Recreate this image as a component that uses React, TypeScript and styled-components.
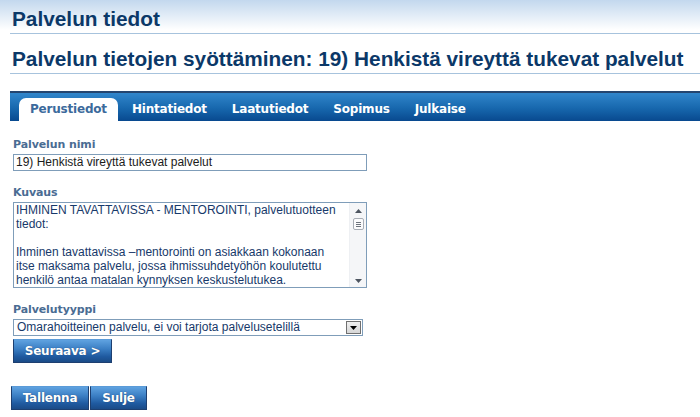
import React from 'react';
import styled, { createGlobalStyle } from 'styled-components';

const GlobalStyle = createGlobalStyle`
  html, body {
    margin: 0;
    padding: 0;
    background: #fff;
  }
  body {
    font-family: 'Liberation Sans', Arial, sans-serif;
  }
`;

const Page = styled.div`
  width: 700px;
  height: 417px;
  overflow: hidden;
  background: linear-gradient(to bottom, #c3d8ee 0px, #ffffff 30px);
  padding: 7px 0 0 10px;
  box-sizing: border-box;
`;

const Heading = styled.h1<{ $size: number }>`
  margin: 0;
  padding: 0 0 2px 2px;
  font-family: 'Liberation Sans', Arial, sans-serif;
  font-size: ${(p) => p.$size}px;
  font-weight: bold;
  color: #0b3868;
  line-height: 24px;
  border-bottom: 1px solid #a7c3dd;
  white-space: nowrap;
`;

const SubHeading = styled(Heading)`
  margin-top: 13px;
`;

const TabBar = styled.nav`
  margin-top: 17px;
  height: 28px;
  border-top: 2px solid #24456f;
  background: linear-gradient(to bottom, #3186cb 0%, #1767ad 55%, #08498f 100%);
  display: flex;
  align-items: flex-end;
  padding-left: 9px;
`;

const Tab = styled.div<{ $active?: boolean }>`
  font-family: Verdana, 'DejaVu Sans', sans-serif;
  font-size: 12px;
  font-weight: bold;
  height: 23px;
  line-height: 22px;
  padding: 0 11px 0 11px;
  margin-right: 3px;
  color: ${(p) => (p.$active ? '#3c6a9c' : '#ffffff')};
  background: ${(p) => (p.$active ? '#ffffff' : 'transparent')};
  border-radius: 7px 7px 0 0;
  letter-spacing: -0.2px;
`;

const Form = styled.div`
  padding: 17px 0 0 3px;
`;

const Label = styled.div`
  font-family: Verdana, 'DejaVu Sans', sans-serif;
  font-size: 11px;
  font-weight: bold;
  color: #4a6c93;
  line-height: 13px;
  margin-bottom: 3px;
  letter-spacing: -0.1px;
`;

const Field = styled.div`
  margin-bottom: 15px;
`;

const TextInput = styled.div`
  width: 354px;
  height: 17px;
  box-sizing: border-box;
  border: 1px solid #7f9db9;
  font-size: 12px;
  line-height: 15px;
  padding: 0 2px;
  color: #1b1b1b;
  white-space: nowrap;
`;

const TextArea = styled.div`
  width: 354px;
  height: 86px;
  box-sizing: border-box;
  border: 1px solid #7f9db9;
  display: flex;
`;

const AreaText = styled.div`
  flex: 1;
  padding: 0 10px 0 2px;
  font-size: 12px;
  line-height: 14px;
  color: #17396a;
  overflow: hidden;
`;

const Scrollbar = styled.div`
  width: 17px;
  display: flex;
  flex-direction: column;
  align-items: center;
  background: #f5f6f8;
  border-left: 1px solid #eef0f3;
  padding: 6px 0 4px;
  box-sizing: border-box;
`;

const Thumb = styled.div`
  margin-top: 5px;
  width: 9px;
  height: 10px;
  border: 1px solid #a8adb5;
  border-radius: 2px;
  background: #fbfbfc;
  display: flex;
  flex-direction: column;
  justify-content: center;
  align-items: center;
  gap: 1px;
`;

const Grip = styled.div`
  width: 5px;
  height: 1px;
  background: #6d737c;
`;

const Spacer = styled.div`
  flex: 1;
`;

const Select = styled.div`
  width: 350px;
  height: 17px;
  box-sizing: border-box;
  border: 1px solid #7f9db9;
  display: flex;
  align-items: center;
  font-size: 12px;
  color: #17396a;
`;

const SelectText = styled.div`
  flex: 1;
  padding-left: 3px;
  white-space: nowrap;
  line-height: 15px;
`;

const SelectButton = styled.div`
  width: 15px;
  height: 13px;
  margin-right: 1px;
  box-sizing: border-box;
  border: 1px solid #707070;
  background: linear-gradient(to bottom, #f0f0f0, #d6d6d6);
  display: flex;
  align-items: center;
  justify-content: center;
`;

const Button = styled.button<{ $width: number }>`
  font-family: Verdana, 'DejaVu Sans', sans-serif;
  font-size: 12px;
  font-weight: bold;
  color: #fff;
  width: ${(p) => p.$width}px;
  height: 24px;
  padding: 0;
  white-space: nowrap;
  letter-spacing: -0.2px;
  border: 1px solid #1d3f70;
  border-top-color: #5b9bd8;
  background: linear-gradient(to bottom, #5fa2e0 0%, #3b7fc4 40%, #1f5aa0 75%, #1a4b87 100%);
  cursor: pointer;
  margin: 0;
  text-shadow: 0 0 1px #1b3d6a;
`;

const NextButton = styled(Button)`
  margin-top: 3px;
`;

const Actions = styled.div`
  display: flex;
  gap: 1px;
  margin-top: 23px;
  margin-left: -2px;
`;

const tabs = ['Perustiedot', 'Hintatiedot', 'Laatutiedot', 'Sopimus', 'Julkaise'];

const App = () => {
  return (
    <>
      <GlobalStyle />
      <Page>
        <Heading $size={20.8}>Palvelun tiedot</Heading>
        <SubHeading $size={20.8}>
          Palvelun tietojen syöttäminen: 19) Henkistä vireyttä tukevat palvelut
        </SubHeading>
        <TabBar>
          {tabs.map((t, i) => (
            <Tab key={t} $active={i === 0}>
              {t}
            </Tab>
          ))}
        </TabBar>
        <Form>
          <Field>
            <Label>Palvelun nimi</Label>
            <TextInput>19) Henkistä vireyttä tukevat palvelut</TextInput>
          </Field>
          <Field>
            <Label>Kuvaus</Label>
            <TextArea>
              <AreaText>
                IHMINEN TAVATTAVISSA - MENTOROINTI, palvelutuotteen tiedot:
                <br />
                <br />
                Ihminen tavattavissa –mentorointi on asiakkaan kokonaan itse maksama palvelu, jossa
                ihmissuhdetyöhön koulutettu henkilö antaa matalan kynnyksen keskustelutukea.
              </AreaText>
              <Scrollbar>
                <svg width="7" height="4" viewBox="0 0 7 4">
                  <path d="M0 4 L3.5 0 L7 4 Z" fill="#4d5560" />
                </svg>
                <Thumb>
                  <Grip />
                  <Grip />
                  <Grip />
                </Thumb>
                <Spacer />
                <svg width="7" height="4" viewBox="0 0 7 4">
                  <path d="M0 0 L3.5 4 L7 0 Z" fill="#4d5560" />
                </svg>
              </Scrollbar>
            </TextArea>
          </Field>
          <Label>Palvelutyyppi</Label>
          <Select>
            <SelectText>Omarahoitteinen palvelu, ei voi tarjota palvelusetelillä</SelectText>
            <SelectButton>
              <svg width="7" height="4" viewBox="0 0 7 4">
                <path d="M0 0 L3.5 4 L7 0 Z" fill="#000" />
              </svg>
            </SelectButton>
          </Select>
          <NextButton $width={99}>Seuraava &gt;</NextButton>
          <Actions>
            <Button $width={78}>Tallenna</Button>
            <Button $width={57}>Sulje</Button>
          </Actions>
        </Form>
      </Page>
    </>
  );
};

export default App;
